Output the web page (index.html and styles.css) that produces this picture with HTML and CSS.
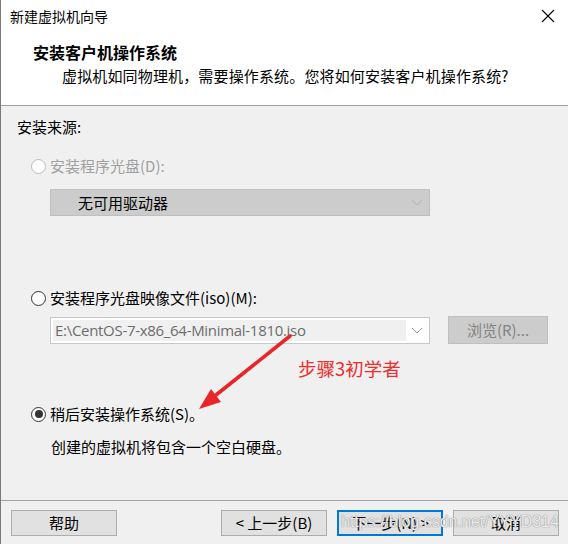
FILE: index.html
```html
<!DOCTYPE html>
<html lang="zh-CN">
<head>
<meta charset="utf-8">
<title>新建虚拟机向导</title>
<link rel="stylesheet" href="styles.css">
</head>
<body>
<div class="window">
  <div class="titlebar">
    <span class="title">新建虚拟机向导</span>
    <svg class="close" width="14" height="14" viewBox="0 0 14 14"><path d="M1 1 L13 13 M13 1 L1 13" stroke="#000" stroke-width="1.1" fill="none"/></svg>
  </div>
  <div class="header">
    <div class="heading">安装客户机操作系统</div>
    <div class="subtitle">虚拟机如同物理机，需要操作系统。您将如何安装客户机操作系统?</div>
  </div>
  <div class="body">
    <div class="label">安装来源:</div>

    <div class="radio-row row-disc disabled">
      <span class="radio"></span><span class="rtext">安装程序光盘(D):</span>
    </div>
    <div class="combo combo-disabled">
      <span class="ctext">无可用驱动器</span>
      <svg class="chev" width="12" height="7" viewBox="0 0 12 7"><path d="M1 1 L6 6 L11 1" stroke="#b0b0b0" stroke-width="1" fill="none"/></svg>
    </div>

    <div class="radio-row row-iso">
      <span class="radio"></span><span class="rtext">安装程序光盘映像文件(iso)(M):</span>
    </div>
    <div class="iso-line">
      <div class="combo combo-iso">
        <span class="edit">E:\CentOS-7-x86_64-Minimal-1810.iso</span>
        <svg class="chev" width="12" height="7" viewBox="0 0 12 7"><path d="M1 1 L6 6 L11 1" stroke="#9a9a9a" stroke-width="1" fill="none"/></svg>
      </div>
      <div class="browse">浏览(R)...</div>
    </div>

    <div class="radio-row row-later">
      <span class="radio checked"></span><span class="rtext">稍后安装操作系统(S)。</span>
    </div>
    <div class="desc">创建的虚拟机将包含一个空白硬盘。</div>

    <div class="note">步骤3初学者</div>
    <svg class="arrow" width="110" height="90" viewBox="0 0 110 90">
      <path d="M98 7 L24 66" stroke="#e8262a" stroke-width="3.6" stroke-linecap="round" fill="none"/>
      <polygon points="7,80 19,60 29,73" fill="#e8262a"/>
    </svg>
  </div>
  <div class="footer">
    <div class="btn">帮助</div>
    <div class="spacer"></div>
    <div class="btn">&lt; 上一步(B)</div>
    <div class="btn primary">下一步(N) &gt;</div>
    <div class="btn">取消</div>
    <div class="watermark">https://blog.csdn.net/YYYD314</div>
  </div>
</div>
</body>
</html>
```

FILE: styles.css
```css
* { box-sizing: border-box; }
html, body { margin: 0; padding: 0; background: #f0f0f0; }
body {
  font-family: "Noto Sans CJK SC", "Noto Sans", sans-serif;
  color: #000;
}
.window {
  width: 568px;
  height: 544px;
  border-left: 1px solid #7a7a7a;
  display: flex;
  flex-direction: column;
  overflow: hidden;
}
.titlebar {
  height: 33px;
  background: #fff;
  display: flex;
  align-items: center;
  justify-content: space-between;
  padding: 0 13px 1px 9px;
}
.title { font-size: 14px; line-height: 20px; }
.close { display: block; }
.header {
  background: #fff;
  height: 73px;
  padding-top: 9px;
  border-bottom: 1px solid #a0a0a0;
}
.heading {
  font-size: 16px;
  font-weight: bold;
  line-height: 20px;
  padding-left: 32px;
}
.subtitle {
  font-size: 15px;
  line-height: 20px;
  margin-top: 4px;
  padding-left: 61px;
  letter-spacing: 0.15px;
}
.body {
  position: relative;
  flex: 1;
  background: #f0f0f0;
  padding: 11px 0 0 16px;
  border-bottom: 1px solid #a0a0a0;
}
.label { font-size: 15px; line-height: 20px; }
.radio-row {
  display: flex;
  align-items: center;
  padding-left: 14px;
  height: 20px;
}
.row-disc { margin-top: 19px; }
.row-iso { margin-top: 72px; }
.row-later { margin-top: 60px; }
.radio {
  width: 15px;
  height: 15px;
  border-radius: 50%;
  border: 1px solid #333;
  background: #fff;
  margin-right: 4px;
  position: relative;
  flex: none;
}
.radio.checked::after {
  content: "";
  position: absolute;
  left: 2.5px; top: 2.5px;
  width: 8px; height: 8px;
  border-radius: 50%;
  background: #333;
}
.disabled .radio { border-color: #bcbcbc; }
.disabled .rtext { color: #a0a0a0; }
.rtext { font-size: 15px; line-height: 20px; }
.combo {
  display: flex;
  align-items: center;
  justify-content: space-between;
  width: 380px;
  margin-left: 33px;
}
.combo-disabled {
  height: 27px;
  margin-top: 13px;
  background: #cccccc;
  border: 1px solid #bfbfbf;
  padding: 0 6px 0 27px;
}
.ctext { font-size: 15px; line-height: 20px; }
.iso-line {
  display: flex;
  align-items: center;
  margin-top: 8px;
}
.combo-iso {
  height: 27px;
  background: #fff;
  border: 1px solid #c8c8c8;
  padding: 2px 6px 2px 2px;
}
.edit {
  background: #f0f0f0;
  width: 353px;
  height: 100%;
  font-size: 15px;
  line-height: 21px;
  color: #6d6d6d;
  padding-left: 2px;
  white-space: nowrap;
  overflow: hidden;
  font-family: "Open Sans", "Noto Sans", sans-serif;
  letter-spacing: -0.3px;
}
.browse {
  margin-left: 18px;
  width: 100px;
  height: 28px;
  background: #cccccc;
  border: 1px solid #bfbfbf;
  color: #838383;
  font-size: 15px;
  line-height: 26px;
  text-align: center;
}
.desc {
  font-size: 15px;
  line-height: 20px;
  margin-top: 13px;
  padding-left: 34px;
}
.note {
  position: absolute;
  left: 297px;
  top: 249px;
  color: #ee2c2c;
  font-size: 18.5px;
  line-height: 26px;
}
.arrow {
  position: absolute;
  left: 191px;
  top: 223px;
}
.footer {
  position: relative;
  height: 43px;
  display: flex;
  align-items: center;
  padding: 0 9px 0 10px;
  gap: 10px;
}
.spacer { flex: 1; }
.btn {
  width: 106px;
  height: 26px;
  background: #e1e1e1;
  border: 1px solid #adadad;
  font-size: 15px;
  line-height: 24px;
  text-align: center;
}
.btn.primary {
  border: 2px solid #0078d7;
  line-height: 22px;
}
.watermark {
  position: absolute;
  left: 340px;
  top: 10px;
  font-family: "Liberation Sans", Arial, sans-serif;
  font-size: 16px;
  line-height: 22px;
  color: rgba(255,255,255,0.85);
  text-shadow: 0 0 1px #8a8a8a, 0 0 1px #8a8a8a;
  white-space: nowrap;
  pointer-events: none;
}
```
